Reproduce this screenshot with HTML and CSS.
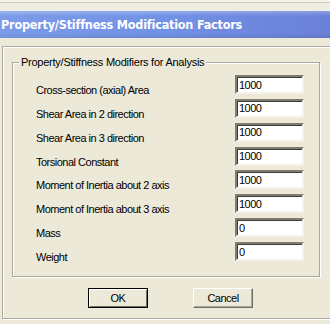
FILE: index.html
```html
<!DOCTYPE html>
<html lang="en">
<head>
    <meta charset="UTF-8">
    <title>Property/Stiffness Modification Factors</title>
    <link rel="stylesheet" href="styles.css">
</head>
<body>
    <div class="window">
        <div class="window-top"></div>

        <!-- Title Bar -->
        <div class="titlebar">Property/Stiffness Modification Factors</div>

        <!-- Dialog Body -->
        <div class="frame">
            <fieldset class="group">
                <legend>Property/Stiffness Modifiers for Analysis</legend>

                <div class="row">
                    <label>Cross-section (axial) Area</label>
                    <input type="text" value="1000">
                </div>
                <div class="row">
                    <label>Shear Area in 2 direction</label>
                    <input type="text" value="1000">
                </div>
                <div class="row">
                    <label>Shear Area in 3 direction</label>
                    <input type="text" value="1000">
                </div>
                <div class="row">
                    <label>Torsional Constant</label>
                    <input type="text" value="1000">
                </div>
                <div class="row">
                    <label>Moment of Inertia about 2 axis</label>
                    <input type="text" value="1000">
                </div>
                <div class="row">
                    <label>Moment of Inertia about 3 axis</label>
                    <input type="text" value="1000">
                </div>
                <div class="row">
                    <label>Mass</label>
                    <input type="text" value="0">
                </div>
                <div class="row">
                    <label>Weight</label>
                    <input type="text" value="0">
                </div>
            </fieldset>

            <div class="buttons">
                <button class="default">OK</button>
                <button>Cancel</button>
            </div>
        </div>
    </div>
</body>
</html>
```

FILE: styles.css
```css
* {
    margin: 0;
    padding: 0;
    box-sizing: border-box;
}

body {
    font-family: 'Liberation Sans', Arial, sans-serif;
    font-size: 11px;
    letter-spacing: -0.5px;
    background: #ECE9D8;
    color: #000;
    width: 330px;
    height: 324px;
    overflow: hidden;
}

.window {
    width: 330px;
    height: 324px;
    overflow: hidden;
}

/* Strip above the title bar */
.window-top {
    height: 11px;
    background: #EFEDE4;
    border-top: 2px solid #F4F2EA;
    box-shadow: inset 0 1px #CFCBBC;
}

/* Title Bar */
.titlebar {
    height: 27px;
    padding-left: 1px;
    line-height: 28px;
    font-family: 'DejaVu Sans Condensed', 'DejaVu Sans', sans-serif;
    font-stretch: condensed;
    font-size: 12.5px;
    font-weight: bold;
    letter-spacing: -0.2px;
    color: #fff;
    white-space: nowrap;
    background:
        linear-gradient(180deg, rgba(255, 255, 255, 0.25) 0, rgba(255, 255, 255, 0) 5px, rgba(0, 0, 0, 0) 22px, rgba(0, 0, 0, 0.08) 27px),
        linear-gradient(90deg, #7C9BEA 0%, #7291E4 50%, #6A80D9 100%);
}

/* Etched frame around the dialog body */
.frame {
    margin: 8px 0 0 2px;
    width: 340px;
    height: 273px;
    border: 1px solid #ACA899;
    box-shadow: inset 1px 1px #fff, 1px 1px #fff;
}

/* Group box */
.group {
    margin: 9px 0 0 9px;
    width: 308px;
    padding: 7px 15px 10px 23px;
    border: 1px solid #ACA899;
    box-shadow: inset 1px 1px #fff, 1px 1px #fff;
}

.group legend {
    margin-left: -17px;
    padding: 0 2px;
    line-height: 12px;
    letter-spacing: -0.25px;
    background: #ECE9D8;
}

.row {
    display: flex;
    height: 23.86px;
}

.row label {
    flex: 1;
    padding-top: 8px;
    line-height: 14px;
}

.row input {
    width: 69px;
    height: 19px;
    padding: 0 2px;
    font-family: 'Liberation Sans', Arial, sans-serif;
    font-size: 11px;
    letter-spacing: -0.5px;
    color: #000;
    background: #fff;
    border-style: solid;
    border-width: 2px;
    border-color: #7F7C70 #F4F2EA #F4F2EA #7F7C70;
    box-shadow: inset 1px 1px #3E3D38;
    outline: none;
}

/* Buttons */
.buttons {
    display: flex;
    gap: 45px;
    margin: 11px 0 0 85px;
}

.buttons button {
    width: 60px;
    height: 20px;
    font-family: 'Liberation Sans', Arial, sans-serif;
    font-size: 11px;
    letter-spacing: -0.5px;
    color: #000;
    background: #ECE9D8;
    border: 1px solid;
    border-color: #fff #716F64 #716F64 #fff;
    box-shadow: inset -1px -1px #ACA899;
}

.buttons .default {
    border-color: #000;
    box-shadow: inset 1px 1px #fff, inset -1px -1px #716F64;
}
```
